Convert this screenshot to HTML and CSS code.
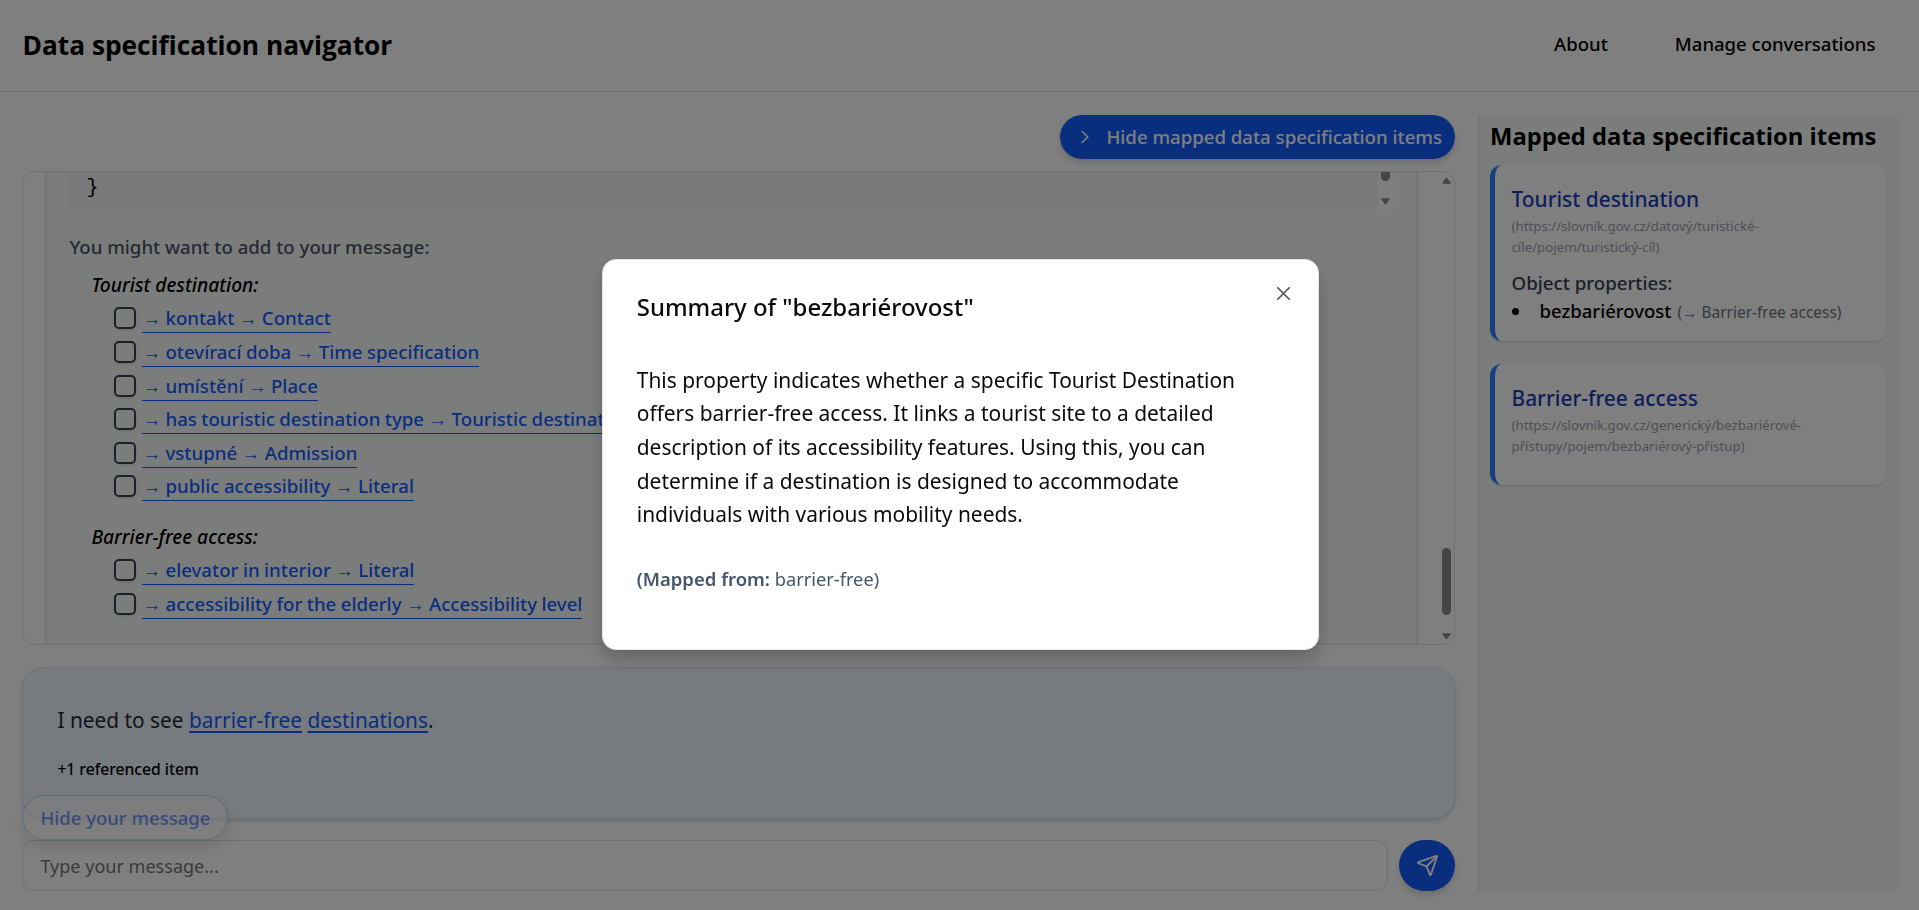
FILE: index.html
```html
<!DOCTYPE html>
<html lang="en">
<head>
<meta charset="utf-8">
<title>Data specification navigator</title>
<link rel="stylesheet" href="styles.css">
</head>
<body>
<div class="app">
  <header class="header">
    <h1 class="brand">Data specification navigator</h1>
    <nav class="nav"><a>About</a><a>Manage conversations</a></nav>
  </header>
  <main class="main">
    <section class="conversation">
      <div class="toolbar">
        <button class="toggle">
          <svg class="chevron" viewBox="0 0 24 24"><path d="m9 18 6-6-6-6"/></svg>
          <span>Hide mapped data specification items</span>
        </button>
      </div>
      <div class="chat">
        <div class="bubble">
          <div class="code"><pre class="code-text">}</pre>
            <div class="code-track"><i class="code-thumb"></i><svg class="arrow" viewBox="0 0 10 7"><path d="M1 0h8q1 0 .6 1L5.7 6.4q-.7.8-1.4 0L.4 1Q0 0 1 0z"/></svg></div>
          </div>
          <p class="hint">You might want to add to your message:</p>
          <h3 class="group">Tourist destination:</h3>
          <ul class="options">
            <li><i class="box"></i><a class="link">→ kontakt → Contact</a></li>
            <li><i class="box"></i><a class="link">→ otevírací doba → Time specification</a></li>
            <li><i class="box"></i><a class="link">→ umístění → Place</a></li>
            <li><i class="box"></i><a class="link">→ has touristic destination type → Touristic destination type</a></li>
            <li><i class="box"></i><a class="link">→ vstupné → Admission</a></li>
            <li><i class="box"></i><a class="link">→ public accessibility → Literal</a></li>
          </ul>
          <h3 class="group group-next">Barrier-free access:</h3>
          <ul class="options">
            <li><i class="box"></i><a class="link">→ elevator in interior → Literal</a></li>
            <li><i class="box"></i><a class="link">→ accessibility for the elderly → Accessibility level</a></li>
          </ul>
        </div>
        <div class="track">
          <svg class="arrow" viewBox="0 0 10 7"><path d="M1 7h8q1 0 .6-1L5.7.6Q5-.2 4.300.6L.4 6Q0 7 1 7z"/></svg>
          <i class="thumb"></i>
          <svg class="arrow" viewBox="0 0 10 7"><path d="M1 0h8q1 0 .6 1L5.7 6.4q-.7.8-1.4 0L.4 1Q0 0 1 0z"/></svg>
        </div>
      </div>
      <div class="message">
        <p class="message-text">I need to see <a>barrier-free</a> <a>destinations</a>.</p>
        <p class="message-note">+1 referenced item</p>
        <button class="hide">Hide your message</button>
      </div>
      <form class="composer">
        <div class="input">Type your message...</div>
        <button class="send" type="button" aria-label="Send"><svg class="send-icon" viewBox="0 0 24 24"><path d="M14.536 21.686a.5.5 0 0 0 .937-.024l6.500-19a.496.496 0 0 0-.635-.635l-19 6.500a.5.5 0 0 0-.024.937l7.930 3.180a2 2 0 0 1 1.112 1.110z"/><path d="m21.854 2.147-10.940 10.939"/></svg></button>
      </form>
    </section>
    <aside class="side">
      <h2 class="side-title">Mapped data specification items</h2>
      <article class="card">
        <h3 class="card-title">Tourist destination</h3>
        <p class="card-url">(https://slovník.gov.cz/datový/turistické-<br>cíle/pojem/turistický-cíl)</p>
        <h4 class="card-sub">Object properties:</h4>
        <p class="prop"><i class="dot"></i><b>bezbariérovost</b><span>(→ Barrier-free access)</span></p>
      </article>
      <article class="card">
        <h3 class="card-title">Barrier-free access</h3>
        <p class="card-url">(https://slovník.gov.cz/generický/bezbariérové-<br>přístupy/pojem/bezbariérový-přístup)</p>
      </article>
    </aside>
  </main>
</div>
<div class="overlay">
  <div class="dialog" role="dialog">
    <h2 class="dialog-title">Summary of "bezbariérovost"</h2>
    <p class="dialog-text">This property indicates whether a specific Tourist Destination offers barrier-free access. It links a tourist site to a detailed description of its accessibility features. Using this, you can determine if a destination is designed to accommodate individuals with various mobility needs.</p>
    <p class="dialog-note"><b>(Mapped from:</b> barrier-free)</p>
    <svg class="close" viewBox="0 0 24 24"><path d="M18 6 6 18M6 6l12 12"/></svg>
  </div>
</div>
</body>
</html>
```
FILE: styles.css
```css
* { box-sizing: border-box; margin: 0; padding: 0; }
html, body { height: 100%; overflow: hidden; }
body { background: #fff; color: #000; font-family: "Noto Sans", "Open Sans", sans-serif; font-size: 18.4px; line-height: 28px; }
button { font: inherit; border: 0; }
ul { list-style: none; }
svg { display: block; flex: none; fill: none; stroke: currentColor; stroke-width: 2; stroke-linecap: round; stroke-linejoin: round; }

.app { height: 910px; display: flex; flex-direction: column; }
.header { height: 92px; flex: none; display: flex; align-items: center; justify-content: space-between; padding: 0 43.500px 0 22.500px; border-bottom: 1px solid #dfe1e6; }
.brand { font-family: "Open Sans", sans-serif; font-size: 26.28px; font-weight: 700; line-height: 36px; margin-bottom: 2px; }
.nav { display: flex; gap: 67px; margin-bottom: 3px; font-size: 18.55px; font-weight: 500; }

.main { flex: 1; min-height: 0; display: flex; gap: 23px; padding: 23px 21px 19px 22.400px; }
.conversation { flex: 1; min-width: 0; display: flex; flex-direction: column; }
.toolbar { display: flex; justify-content: flex-end; margin-bottom: 12px; }
.toggle { height: 44px; display: flex; align-items: center; gap: 10px; padding: 0 13px 0 14px; border-radius: 22px; background: #155dfc; color: #fff; font-size: 18.63px; font-weight: 500; box-shadow: 0 4px 6px rgba(0,0,0,.16); white-space: nowrap; }
.chevron { width: 22px; height: 22px; stroke-width: 1.8; }

.chat { height: 474px; display: flex; border: 1px solid #dfe3e8; border-radius: 12px; overflow: hidden; padding-left: 23px; }
.bubble { flex: 1; min-width: 0; padding-left: 22px; padding-right: 23px; border: solid #e2e5e8; border-width: 0 1px; background: #f7faf9; box-shadow: 0 1px 4px rgba(0,0,0,.14); }
.code { height: 37px; display: flex; justify-content: space-between; background: #f1f3f6; border-bottom-left-radius: 6px; overflow: hidden; margin-bottom: 21px; }
.code-text { font-family: "Liberation Mono", monospace; font-size: 20px; line-height: 31px; padding-left: 17px; }
.code-track { width: 15px; background: #fcfcfc; display: flex; flex-direction: column; align-items: center; justify-content: space-between; padding-bottom: 4px; }
.code-thumb { width: 9px; height: 9px; border-radius: 0 0 5px 5px; background: #8b8b8b; }
.arrow { width: 9px; height: 7px; fill: #8b8b8b; stroke: none; }
.hint { font-size: 18.61px; font-weight: 500; line-height: 33.600px; color: #4a5565; margin-bottom: 4.400px; }
.group { padding-left: 22px; font-size: 19.2px; font-style: italic; font-weight: 500; line-height: 33.600px; }
.group-next { margin-top: 16.800px; }
.options { padding-left: 45px; }
.options li { height: 33.600px; display: flex; align-items: center; gap: 6px; }
.box { width: 22px; height: 22px; border: 2px solid #364153; border-radius: 5px; box-shadow: 0 1px 3px rgba(0,0,0,.12); }
.link { padding-top: 1px; border-bottom: 1px solid #155dfc; color: #155dfc; font-size: 18.65px; font-weight: 500; line-height: 28px; word-spacing: -.4px; white-space: nowrap; }
.track { width: 37px; flex: none; display: flex; flex-direction: column; align-items: flex-end; padding: 5px 3px 4px 0; }
.thumb { width: 9px; height: 67px; border-radius: 5px; background: #8b8b8b; margin: auto 0 18px; }

.message { position: relative; height: 152px; margin: 22px 0 21px; padding: 36px 34px 0; border: 1px solid #dde3ea; border-radius: 22px; background: #eef4fd; box-shadow: 0 2px 4px rgba(0,0,0,.16); }
.message-text { font-size: 20.85px; line-height: 33.600px; color: #1e2939; margin-bottom: 17.500px; }
.message-text a { color: #155dfc; text-decoration: underline; text-decoration-thickness: 2px; text-underline-offset: 3px; text-decoration-skip-ink: none; }
.message-note { font-size: 15.66px; font-weight: 500; }
.hide { position: absolute; left: -1px; top: 127px; height: 45px; padding: 0 17px; border: 1px solid #8ec5ff; border-radius: 23px; background: #fff; color: #155dfc; font-size: 18.52px; font-weight: 500; opacity: .6; box-shadow: 0 8px 14px rgba(0,0,0,.16); }
.composer { height: 50.500px; display: flex; gap: 11px; }
.input { flex: 1; border: 1px solid #dfe1e6; border-radius: 12px; padding: 0 17px; font-size: 18.05px; line-height: 50px; color: #757575; }
.send { width: 56px; height: 51px; display: flex; align-items: center; justify-content: center; border-radius: 28px; background: #155dfc; color: #fff; box-shadow: 0 4px 6px rgba(0,0,0,.14); }
.send-icon { width: 23px; height: 23px; }

.side { width: 420px; flex: none; padding: 4.500px 12px 0 11px; border-left: 1px solid #dcdfe4; background: #f7faf9; }
.side-title { font-family: "Open Sans", sans-serif; font-size: 23.75px; font-weight: 700; line-height: 33.600px; margin-bottom: 12px; white-space: nowrap; }
.card { padding: 20px 16px 16.200px 16.500px; border-left: 5px solid #2b7fff; border-radius: 12px; background: #fff; box-shadow: 0 1px 3px rgba(0,0,0,.14); margin-bottom: 23px; }
.card-title { font-size: 20.9px; font-weight: 500; line-height: 28px; color: #193cb8; margin-bottom: 3.100px; }
.card-url { font-size: 13.26px; line-height: 21px; color: #99a1af; margin-bottom: 11.200px; white-space: nowrap; }
.card-sub { font-size: 18.68px; font-weight: 500; line-height: 28px; color: #364153; }
.prop { height: 27.500px; display: flex; align-items: center; white-space: nowrap; }
.dot { width: 7px; height: 7px; border-radius: 50%; background: #000; margin-right: 21px; }
.prop b { font-size: 18.54px; font-weight: 500; margin-right: 6px; }
.prop span { font-size: 15.44px; color: #6a7282; padding-top: 2px; }

.overlay { position: fixed; inset: 0; display: flex; align-items: center; justify-content: center; padding: 0 0 1.500px 1.500px; background: rgba(0,0,0,.5); }
.dialog { position: relative; width: 717px; height: 391px; padding: 30.500px 30px 0 34px; border: 1px solid #e5e5e5; border-radius: 14px; background: #fff; box-shadow: 0 10px 18px rgba(0,0,0,.2); }
.dialog-title { font-size: 23.95px; font-weight: 500; line-height: 33.600px; color: #0a0a0a; margin-bottom: 40px; }
.dialog-text { font-size: 20.93px; line-height: 33.600px; color: #0a0a0a; margin-bottom: 33px; }
.dialog-note { font-size: 18.25px; color: #45556c; }
.dialog-note b { font-weight: 600; font-size: 18.5px; }
.close { position: absolute; right: 23px; top: 22px; width: 23px; height: 23px; color: #555; stroke-width: 1.8; }
```
